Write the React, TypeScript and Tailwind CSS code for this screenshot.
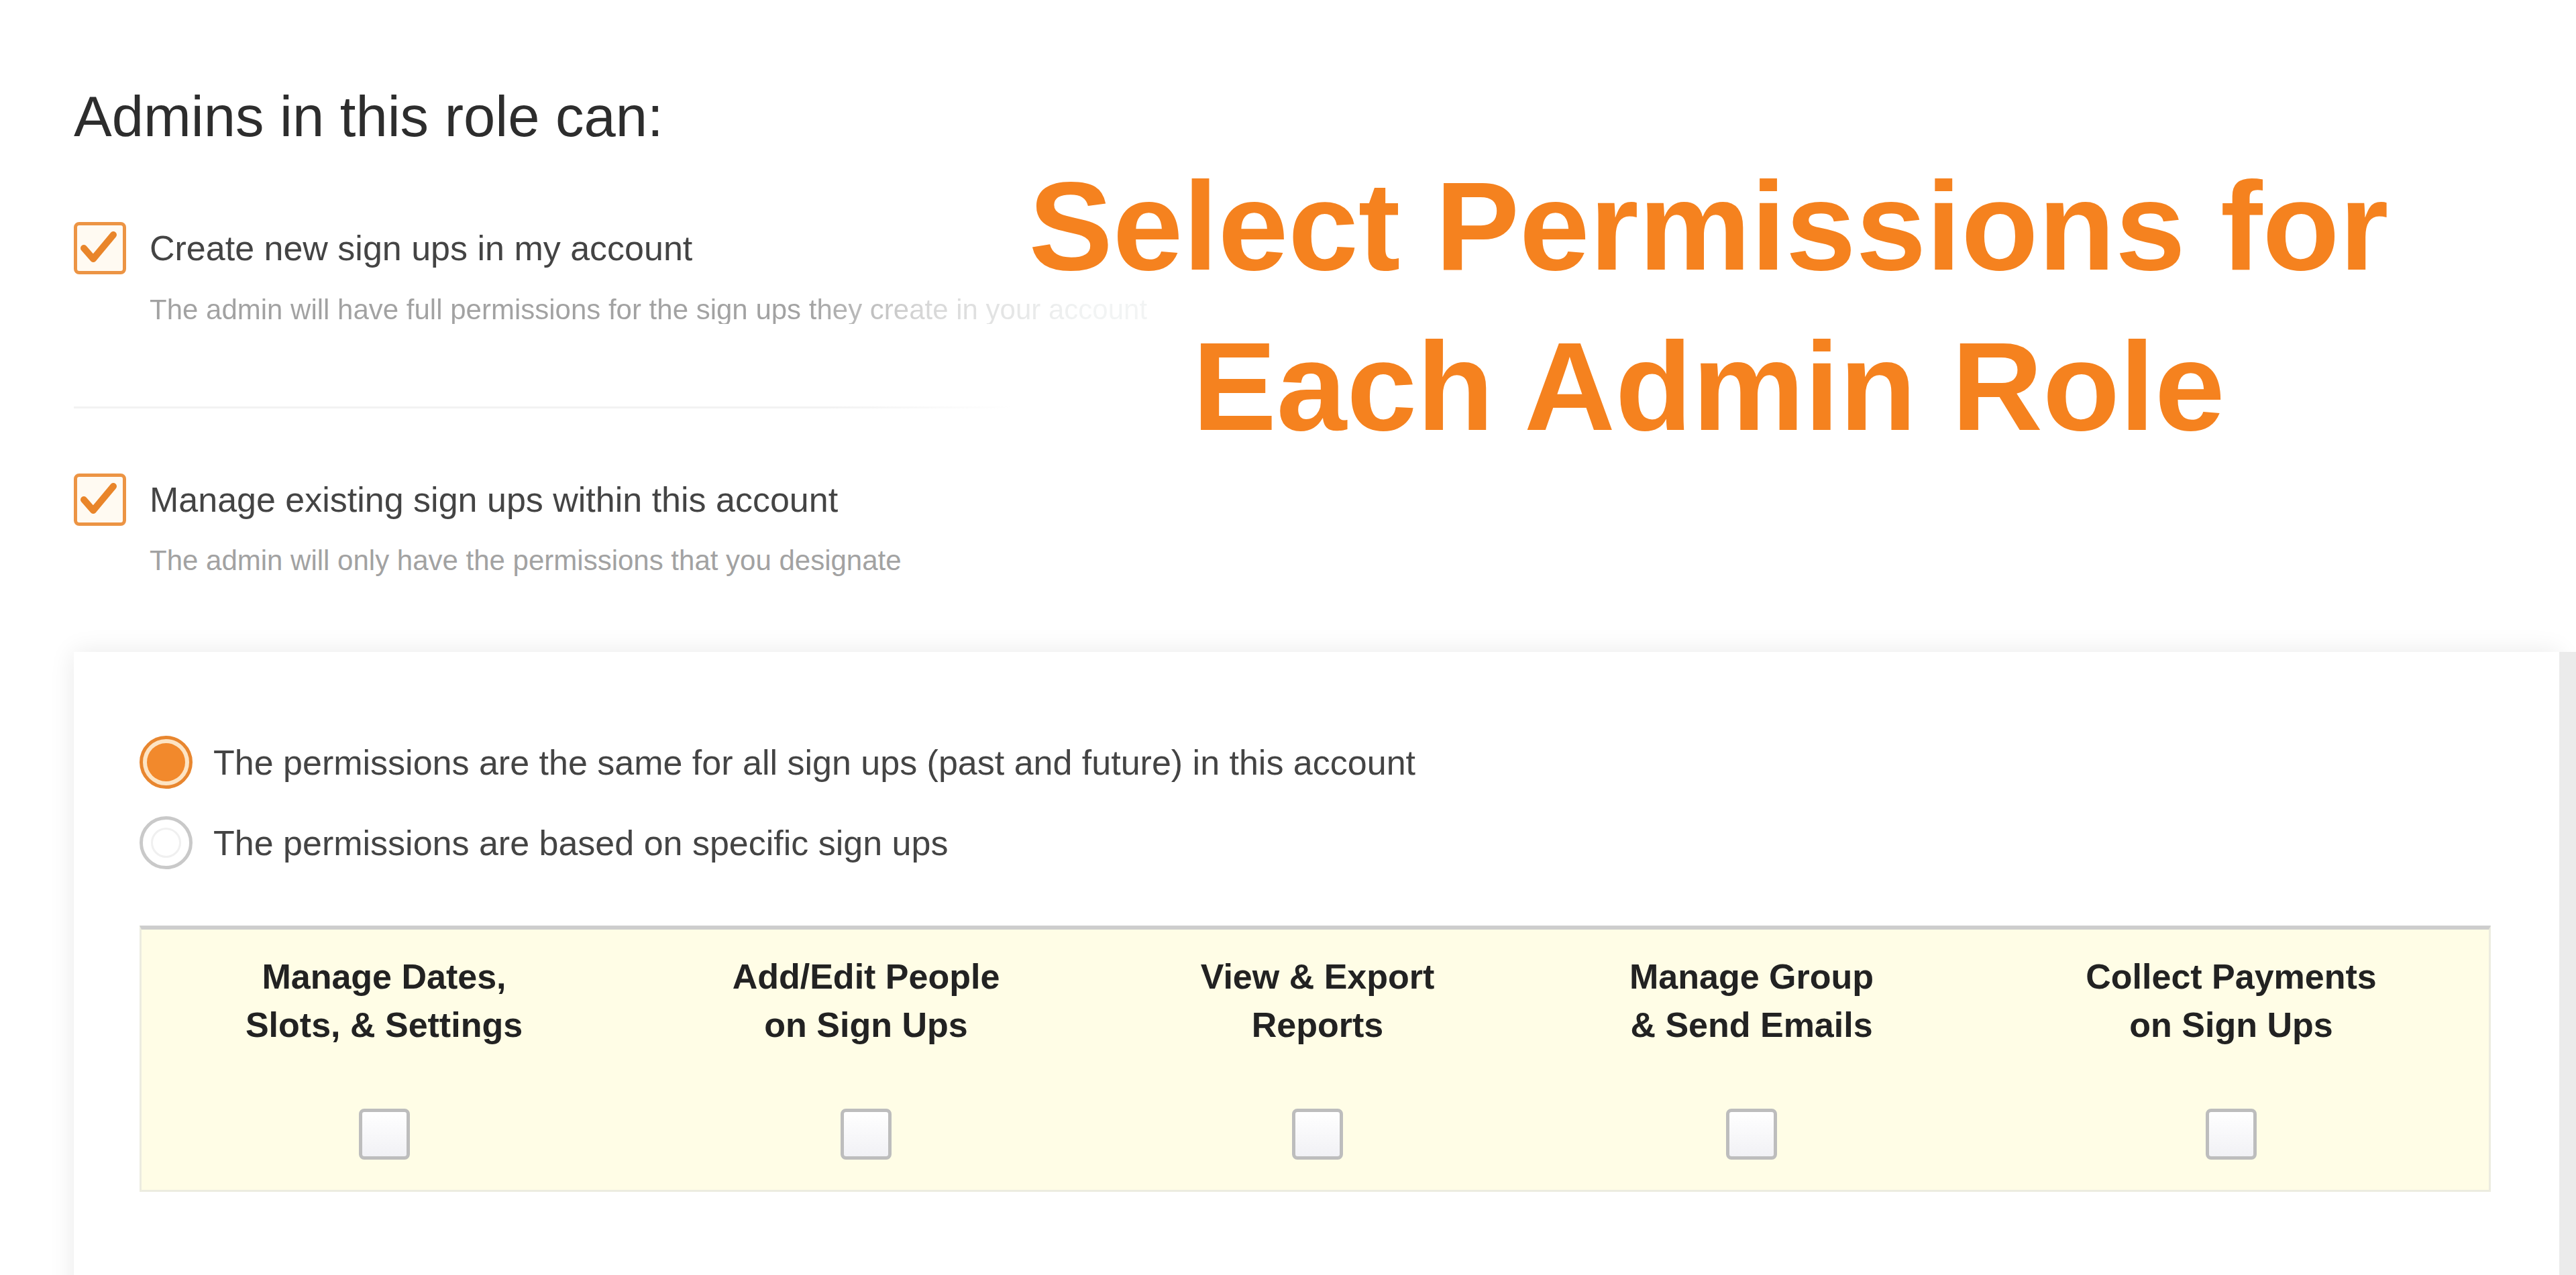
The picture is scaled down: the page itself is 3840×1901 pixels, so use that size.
import React from "react";

const font = { fontFamily: '"Liberation Sans", Arial, Helvetica, sans-serif' };

function CheckedBox() {
  return (
    <div className="w-[78px] h-[78px] shrink-0 rounded-[8px] border-[5px] border-[#ec9444] bg-[#fffaf2] flex items-center justify-center">
      <svg width="68" height="68" viewBox="0 0 68 68">
        <path d="M10 34 L24 50 L54 14" fill="none" stroke="#e9852a" strokeWidth="10" strokeLinecap="round" strokeLinejoin="round" />
      </svg>
    </div>
  );
}

function EmptyBox() {
  return (
    <div className="w-[76px] h-[76px] rounded-[8px] border-[5px] border-[#bdbdbd] bg-[linear-gradient(to_bottom,#ffffff,#f1f1f5)]" />
  );
}

function RadioOn() {
  return (
    <div className="w-[79px] h-[79px] shrink-0 rounded-full border-[5px] border-[#e8862f] bg-[#fde4c4] p-[6px]">
      <div className="w-full h-full rounded-full bg-[#f2892c]" />
    </div>
  );
}

function RadioOff() {
  return (
    <div className="w-[79px] h-[79px] shrink-0 rounded-full border-[5px] border-[#c9c9c9] bg-white p-[12px]">
      <div className="w-full h-full rounded-full border-[3px] border-[#f0f0f0]" />
    </div>
  );
}

const columns = [
  ["Manage Dates,", "Slots, & Settings"],
  ["Add/Edit People", "on Sign Ups"],
  ["View & Export", "Reports"],
  ["Manage Group", "& Send Emails"],
  ["Collect Payments", "on Sign Ups"],
];

export default function App() {
  return (
    <div className="relative w-full h-[1901px] overflow-hidden bg-white" style={font}>
      <div className="pt-[131px] pl-[110px]">
        <h1 className="text-[85px] leading-none text-[#2d2d2d] font-normal">Admins in this role can:</h1>

        <div className="mt-[115px] flex gap-[35px]">
          <CheckedBox />
          <div>
            <div className="text-[52px] leading-[78px] text-[#444]">Create new sign ups in my account</div>
            <div className="mt-[32px] text-[42px] leading-none whitespace-nowrap bg-[linear-gradient(to_right,#a2a2a2_0px,#a2a2a2_980px,#d6d6d6_1150px,#f2f4f4_1400px)] bg-clip-text text-transparent">
              The admin will have full permissions for the sign ups they create in your account
            </div>
          </div>
        </div>

        <div className="mt-[123px] w-[1400px] h-[3px] bg-[linear-gradient(to_right,#f2f2f2,#f2f2f2_80%,#ffffff)]" />

        <div className="mt-[97px] flex gap-[35px]">
          <CheckedBox />
          <div>
            <div className="text-[52px] leading-[78px] text-[#444]">Manage existing sign ups within this account</div>
            <div className="mt-[31px] text-[42px] leading-none text-[#a2a2a2]">
              The admin will only have the permissions that you designate
            </div>
          </div>
        </div>
      </div>

      <div className="mt-[115px] flex pl-[110px]">
        <div className="flex-1 h-[1000px] bg-white shadow-[0_0_36px_rgba(0,0,0,0.09)] pt-[125px] pl-[98px]">
          <div className="flex items-center gap-[31px]">
            <RadioOn />
            <span className="text-[52px] leading-none text-[#444]">
              The permissions are the same for all sign ups (past and future) in this account
            </span>
          </div>
          <div className="mt-[41px] flex items-center gap-[31px]">
            <RadioOff />
            <span className="text-[52px] leading-none text-[#444]">The permissions are based on specific sign ups</span>
          </div>

          <div className="mt-[84px] w-[3505px] bg-[#fffde6] border-t-[6px] border-t-[#cdcdcd] border-x-[3px] border-b-[3px] border-x-[#ecece0] border-b-[#ecece0] pt-[34px] pb-[45px] grid grid-cols-[723fr_714fr_632fr_662fr_768fr]">
            {columns.map((c, i) => (
              <div key={i} className="flex flex-col items-center">
                <div className="text-[52px] leading-[72px] font-bold text-[#222] text-center">
                  <div>{c[0]}</div>
                  <div>{c[1]}</div>
                </div>
                <div className="mt-[89px]">
                  <EmptyBox />
                </div>
              </div>
            ))}
          </div>
        </div>
        <div className="w-[25px] bg-[#ebebeb]" />
      </div>

      <div className="absolute top-[218px] left-[1347px] w-[2400px] text-center text-[188px] leading-[239px] font-bold text-[#f5821f] whitespace-nowrap">
        <div>Select Permissions for</div>
        <div>Each Admin Role</div>
      </div>
    </div>
  );
}
